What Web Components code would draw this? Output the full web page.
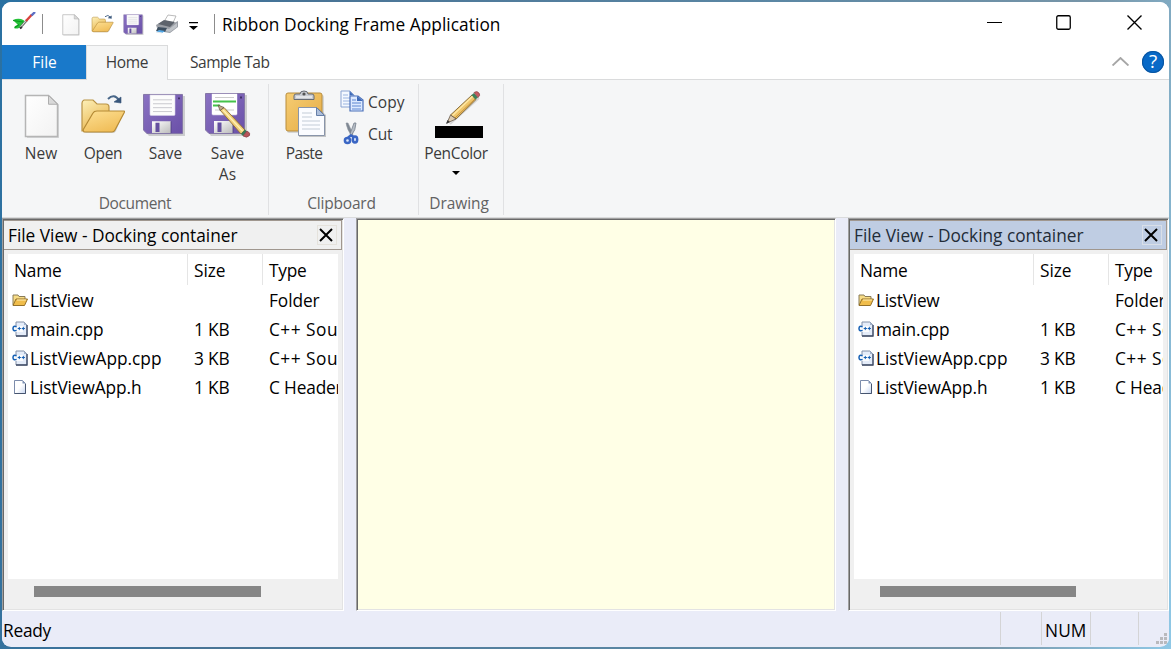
<!DOCTYPE html>
<html lang="en"><head><meta charset="utf-8"><title>Ribbon Docking Frame Application</title>
<style>
html,body{margin:0;height:100%;overflow:hidden}
body{background:linear-gradient(100deg,#2a71a2 0,#497496 25%,#5b87a4 60%,#7795a8 85%,#8fc8e6 100%);font-family:"Open Sans","Noto Sans",sans-serif;font-size:17.3px;color:#000}
</style></head><body>
<app-window></app-window>
<script>
const make=(name,html,after)=>customElements.define(name,class extends HTMLElement{
  connectedCallback(){
    if(this.shadowRoot)return;
    const t=document.createElement('template');
    t.innerHTML=typeof html==='function'?html(this):html;
    this.attachShadow({mode:'open'}).append(t.content.cloneNode(true));
    if(after)after(this);
  }
});

const folder=`<defs><linearGradient id="fa" y2="1" x2=".5"><stop stop-color="#fdf0b8"/><stop offset="1" stop-color="#e9b650"/></linearGradient><linearGradient id="fb" x2=".6" y2="1"><stop stop-color="#fde094"/><stop offset="1" stop-color="#f0bd58"/></linearGradient></defs>
<path d="M2 38V10q0-2 2-3h9l4 4h9q3 0 3 3v24z" fill="url(#fa)" stroke="#b99345" stroke-width="1.200"/><path d="M4 39L14 19l30-1L36 38q-1 2-3 2H6z" fill="#777" opacity=".3"/><path d="M3 37L13 20q1-2 4-2h27q1 0 0 2l-9 17q-1 2-3 2H4z" fill="url(#fb)" stroke="#b58a35" stroke-width="1.200"/>
<path d="M28 6q6-6 11 1" fill="none" stroke="#496789" stroke-width="2"/><path d="M34 9l7-5v6z" fill="#38567b" stroke="#38567b" stroke-width=".6"/>`;
const floppy=`<defs><linearGradient id="sa" x2="1" y2="1"><stop stop-color="#8a72c2"/><stop offset="1" stop-color="#6a50a8"/></linearGradient><linearGradient id="sb" x2="1" y2="1"><stop stop-color="#fff"/><stop offset="1" stop-color="#bbb"/></linearGradient></defs>
<path d="M3 2h39v41H6l-3-4z" fill="#555" opacity=".25" transform="translate(1 1)"/><path d="M1.500 1.500h39v40H5l-3.500-3.500z" fill="url(#sa)" stroke="#8476a6"/><path d="M8 2h25v20q0 1-1 1H9q-1 0-1-1z" fill="#fcfcfc" stroke="#d5cfe5" stroke-width=".6"/><path d="M11 7h19M11 11h19M11 15h19M11 19h19" stroke="#c9c9ce"/><path d="M36 4.500h2v2h-2z" fill="#403067"/><path d="M10 29h19v12H10z" fill="url(#sb)"/><path d="M13.500 30.500h4v9.500h-4z" fill="#6550a0"/><path d="M29 29v12" stroke="#4b3a7c" stroke-width=".8"/>`;
const icons={
 page:['0 0 36 46',`<path d="M2 1h23l9 9v34H2z" fill="#9a9a9a" opacity=".35" transform="translate(1 1)"/><path d="M1.500 1.500h23l9 9v33h-32z" fill="url(#pg)" stroke="#b5b5b5" stroke-width="1.500"/><path d="M24.500 1.500v9h9z" fill="#d9d9d9" stroke="#adadad"/><defs><linearGradient id="pg" x2="1" y2="1"><stop stop-color="#fff"/><stop offset="1" stop-color="#f2f2f2"/></linearGradient></defs>`],
 folder:['0 0 48 44',folder],
 floppy:['0 0 44 44',floppy],
 saveas:['0 0 48 46',floppy+`<rect x="8" y="2" width="25" height="20" fill="#fff"/><path d="M11 5.500h19M11 18h19" stroke="#ccc"/><path d="M9 9.500h23" stroke="#45c24b" stroke-width="1.800"/><path d="M9 13.500h7" stroke="#45c24b" stroke-width="1.800"/><path d="M16 18l4-2.500L41 38l-4 4z" fill="#f1cf7a" stroke="#8d6d36" stroke-width=".9"/><path d="M19 18l19.500 21" stroke="#fff0b4" stroke-width="1.400"/><path d="M14 13l6 2.500L16 18.500z" fill="#c4ac88" stroke="#5b5142" stroke-width=".7"/><path d="M37 42l4-4.500 2 2-4 4.500z" fill="#3a7a57"/><path d="M39 44l4-5q4 2 2.500 4.500-2.500 3-6.500.5z" fill="#b8555a" stroke="#84444a" stroke-width=".7"/>`],
 printer:['0 0 24 20',`<path d="M10 6l3-5 8 1-4 9z" fill="#fff" stroke="#aaa" stroke-width=".8"/><path d="M1 11l7-4 11 2 4-2v6l-8 6-12-2z" fill="#9a9ea5"/><path d="M3 10l6-4 11 2-5 5z" fill="#5d636c"/><path d="M2 13l12 2 8-6v4l-7 5-12-2z" fill="#bfc3c8"/><path d="M3 13l9 1-2 4-9-1z" fill="#3e4f60"/><path d="M4 16l6 1-3 2-6-1z" fill="#55a8e5"/><path d="M1 18l6 1" stroke="#e5e9ec"/>`],
 brush:['0 0 24 20',`<path d="M1 8q4-2 8-1 4 1 4 4-2 4-6 5-3 1-5 0l1-2 3-1-2-2z" fill="#26c238"/><path d="M1 8.500l10 1.500M3 15.500l4-3" stroke="#0b9a20" stroke-width="1.200"/><path d="M8 16l7-8" stroke="#777" stroke-width="2.400"/><path d="M8.500 15l6-7" stroke="#ddd" stroke-width="1"/><path d="M8 16.500l2-1.500" stroke="#333" stroke-width="1.800"/><path d="M14 9l6-6.500" stroke="#d8433c" stroke-width="2.400"/><path d="M19.500 3.500L23 0" stroke="#5b6fc4" stroke-width="2.400"/>`],
 paste:['0 0 42 48',`<defs><linearGradient id="pa" x2="1" y2="1"><stop stop-color="#f6cd74"/><stop offset="1" stop-color="#e5ab43"/></linearGradient></defs><rect x="2" y="5" width="37" height="38" rx="2" fill="#777" opacity=".25"/><rect x="1" y="3" width="36" height="38" rx="2" fill="url(#pa)" stroke="#b88d3d"/><path d="M9 9.500V6q0-2 2-2h4q0-3 4-3t4 3h4q2 0 2 2v3.500z" fill="#c8cbd1" stroke="#666b73"/><circle cx="19" cy="4" r="1.600" fill="#555"/><path d="M11 7h16" stroke="#fff"/><path d="M14 18h19l8 7v22H14z" fill="#666" opacity=".35"/><path d="M13.500 17.500h18l8 8v20h-26z" fill="#fbfcff" stroke="#8995aa"/><path d="M31.500 17.500v8h8z" fill="#aebfdb" stroke="#667fa8"/><path d="M17 23h10M17 27h10M17 31h18M17 35h18M17 39h18" stroke="#c3cbd8" stroke-width="1.200"/>`],
 copy:['0 0 24 22',`<path d="M1 1h9l4 4v12H1z" fill="#f4f8ff" stroke="#8ba4d2"/><path d="M9.500 1v4.500H14z" fill="#3d69b8"/><path d="M3 5h5M3 8h8M3 11h8M3 14h8" stroke="#9cb5e0"/><path d="M10 6h8l5 4v11H10z" fill="#dce9ff" stroke="#4a70ba" stroke-width="1.200"/><path d="M17 6v5h6z" fill="#3d69b8"/><path d="M12 10h4M12 13h9M12 16h9M12 19h9" stroke="#5e88d2" stroke-width="1.200"/>`],
 cut:['0 0 18 23',`<path d="M4 1q1 7 6 13l1-2L6 1z" fill="#7e8792" stroke="#8d959f" stroke-width=".6"/><path d="M14 1q0 7-5 13l-1-2 4-11z" fill="#b5bcc5" stroke="#77818e" stroke-width=".8"/><ellipse cx="5.500" cy="18.500" rx="2.600" ry="2.500" fill="#dfe9fb" stroke="#3a66c4" stroke-width="2.500"/><ellipse cx="13" cy="17.500" rx="2.200" ry="3" fill="#dfe9fb" stroke="#3a66c4" stroke-width="2.500"/><path d="M6 15.500l3-2 3 1.500" fill="none" stroke="#3a66c4" stroke-width="2.400"/>`],
 pencil:['0 0 36 36',`<path d="M5 34L34 8" stroke="#777" stroke-width="2" opacity=".25"/><path d="M5.500 25L27 5l4 4.500-20 19.500z" fill="#efc56a" stroke="#7d6336" stroke-width=".9"/><path d="M7.500 25.500L28 6" stroke="#ffe7a3" stroke-width="1.600"/><path d="M10 28L30 9" stroke="#c28d37" stroke-width="1"/><path d="M2 33l3.500-8 5.500 4z" fill="#dccab0" stroke="#65584a" stroke-width=".8"/><path d="M1 34l1.500-4 2.500 2z" fill="#383838"/><path d="M26.500 5l2.500-2 4 4.500-2.500 2z" fill="#3d8159"/><path d="M29 2.500q3-2 5 .5 2 2-1 4.500z" fill="#c55c61" stroke="#8c4a4c" stroke-width=".7"/>`],
 fdir:['0 0 16 14',`<path d="M1 12V2h5l1 1.500h6V6" fill="#f7dc86" stroke="#8a7c58"/><path d="M1 12.500L4 6h11.500l-3 6.500z" fill="#f0bd4b" stroke="#94712a"/><path d="M5 7h9" stroke="#fff0b5"/>`],
 fcpp:['0 0 16 16',`<path d="M4 1h8l3 3v11H4z" fill="#e4ecf9" stroke="#8390a8"/><path d="M15 4v11H4" fill="none" stroke="#404c66" stroke-width="1.300"/><path d="M12 1v3h3z" fill="#a2b1ca"/><path d="M0 5h11v6H0z" fill="#fff" opacity=".85"/><path d="M4.600 5.700Q1 4.400 1 7.500t3.600 1.900" fill="none" stroke="#1560b5" stroke-width="1.500"/><path d="M5.700 7.500h3.200M7.300 5.900v3.200M9.700 7.500h3.200M11.300 5.900v3.200" stroke="#1560b5" stroke-width="1"/>`],
 fh:['0 0 16 16',`<path d="M2.500 1.500h8l3 3v10h-11z" fill="url(#hg)" stroke="#7c8cab"/><path d="M13.500 5v9.500h-11" fill="none" stroke="#46546f"/><path d="M10.500 1.500v3h3z" fill="#7f92b4"/><defs><linearGradient id="hg" x2="1" y2="1"><stop offset=".5" stop-color="#fff"/><stop offset="1" stop-color="#c6d5f0"/></linearGradient></defs>`],
 min:['0 0 15 15',`<path d="M0 7.500h15" stroke="#000"/>`],
 max:['0 0 15 15',`<rect x=".75" y=".75" width="13.500" height="13.500" rx="1.500" fill="none" stroke="#000" stroke-width="1.300"/>`],
 close:['0 0 15 15',`<path d="M.5.5l14 14M14.500.5l-14 14" stroke="#000" stroke-width="1.350"/>`],
 up:['0 0 16 9',`<path d="M.5 8.500L8 1l7.500 7.500" fill="none" stroke="#a6a6a6" stroke-width="1.800"/>`],
 x:['0 0 14 14',`<path d="M1 1l12 12M13 1L1 13" stroke="#000" stroke-width="2"/>`],
 drop:['0 0 8 4',`<path d="M0 0h8L4 4z"/>`],
 qat:['0 0 9 8',`<path d="M0 0h9v1.300H0zM0 4h9L4.500 8z"/>`],
 grip:['0 0 11 11',`<path d="M8 0h3v3H8zM4 4h3v3H4zM8 4h3v3H8zM0 8h3v3H0zM4 8h3v3H4zM8 8h3v3H8z" fill="#b9b9bd"/>`]
};
make('ui-icon',e=>{const [v,p]=icons[e.getAttribute('name')];return `<style>:host{display:block;flex:none;width:${e.getAttribute('w')}px;height:${e.getAttribute('h')}px}svg{display:block;width:100%;height:100%}</style><svg viewBox="${v}" preserveAspectRatio="none">${p}</svg>`});

make('title-bar',`<style>
:host{display:flex;height:43px;align-items:center;box-sizing:border-box;padding-left:10px;background:#fff}
.sep{width:1px;height:20px;background:#8c8c8c}
.q{display:flex;align-items:center}
.w{margin-left:auto;display:flex;align-items:center;gap:54px;padding:0 27px 2px 0}
</style>
<ui-icon name="brush" w="24" h="20" style="margin-bottom:3px"></ui-icon><div class="sep" style="margin-left:6px"></div>
<div class="q"><ui-icon name="page" w="18" h="22" style="margin-left:19px;margin-top:3px"></ui-icon><ui-icon name="folder" w="24" h="20" style="margin-left:11px"></ui-icon><ui-icon name="floppy" w="21" h="21" style="margin:1px 0 0 8px"></ui-icon><ui-icon name="printer" w="24" h="20" style="margin-left:11px"></ui-icon><ui-icon name="qat" w="9" h="8" style="margin:5px 0 0 10px"></ui-icon></div>
<div class="sep" style="margin:0 7px 0 16px"></div><ui-label w="277" style="padding-top:1px">Ribbon Docking Frame Application</ui-label>
<div class="w"><ui-icon name="min" w="15" h="15"></ui-icon><ui-icon name="max" w="15" h="15"></ui-icon><ui-icon name="close" w="15" h="15" style="margin-left:2px"></ui-icon></div>`);

make('ribbon-tabs',`<style>
:host{display:flex;height:35px;background:linear-gradient(#dadbdc,#dadbdc) bottom/100% 1px no-repeat #fff;font-size:15.500px;color:#3b3b3b;line-height:34px}
div{box-sizing:border-box;text-align:center}
.f{width:84px;height:34px;background:#1979ca;color:#fff;padding-left:1px}
.h{width:82px;background:#f5f6f7;border:1px solid #dadbdc;border-bottom:0;line-height:33px}
.s{margin-left:22px}
.r{margin-left:auto;display:flex;align-items:center;gap:13px;padding:0 5px 2px 0}
.c{width:22px;height:22px;border-radius:50%;background:#0869c7;box-shadow:inset 0 0 0 1px #0a56a2;color:#fff;line-height:21px;font-size:19px}
</style><div class="f"><ui-label w="23">File</ui-label></div><div class="h"><ui-label w="41">Home</ui-label></div><div class="s"><ui-label w="78">Sample Tab</ui-label></div>
<div class="r"><ui-icon name="up" w="17" h="9"></ui-icon><div class="c">?</div></div>`);

make('ribbon-button',`<style>:host{display:flex;flex-direction:column;align-items:center;width:62px;line-height:21px}
.i{height:59px;display:flex;align-items:flex-start}</style><div class="i"><slot name="icon"></slot></div><slot></slot>`);
make('ribbon-group',e=>`<style>:host{display:flex;flex-direction:column;box-sizing:border-box;height:131px;width:${e.getAttribute('w')}px;border-right:1px solid #e0e1e3}
.b{flex:1;display:flex}.c{color:#626262;text-align:center;height:22px;line-height:20px}.c ui-label{position:relative;left:${e.getAttribute('shift')||0}px}</style><div class="b"><slot></slot></div><div class="c"><ui-label w="${e.getAttribute('lw')}">${e.getAttribute('label')}</ui-label></div>`);
make('ribbon-panel',`<style>
:host{display:flex;box-sizing:border-box;height:137px;padding:4px 0 0 0;background:#f5f6f7;font-size:15.500px;color:#3b3b3b}
.small{display:flex;flex-direction:column;margin-left:5px;padding-top:2px}
.row{display:flex;align-items:center;height:32px}
.pen{display:flex;flex-direction:column;align-items:center}.bar{width:48px;height:12px;background:#000}
</style>
<ribbon-group w="267" lw="71" label="Document">
<ribbon-button style="margin-left:8px"><ui-icon slot="icon" name="page" w="36" h="45" style="margin:10px 0 0 2px"></ui-icon><ui-label w="31">New</ui-label></ribbon-button>
<ribbon-button><ui-icon slot="icon" name="folder" w="48" h="44" style="margin:9px 0 0 2px"></ui-icon><ui-label w="37">Open</ui-label></ribbon-button>
<ribbon-button><ui-icon slot="icon" name="floppy" w="44" h="43" style="margin:9px 2px 0 0"></ui-icon><ui-label w="32" style="margin-left:1px">Save</ui-label></ribbon-button>
<ribbon-button><ui-icon slot="icon" name="saveas" w="48" h="46" style="margin:8px 0 0 2px"></ui-icon><ui-label w="32" style="margin-left:1px">Save</ui-label><ui-label w="16" style="margin-left:1px">As</ui-label></ribbon-button>
</ribbon-group>
<ribbon-group w="150" lw="67" label="Clipboard" shift="-2">
<ribbon-button style="margin-left:4px"><ui-icon slot="icon" name="paste" w="42" h="48" style="margin:6px 0 0 3px"></ui-icon><ui-label w="35">Paste</ui-label></ribbon-button>
<div class="small"><div class="row"><ui-icon name="copy" w="24" h="22" style="margin-top:-2px"></ui-icon><ui-label w="35" style="margin-left:4px">Copy</ui-label></div><div class="row"><ui-icon name="cut" w="18" h="23" style="margin:-1px 0 0 2px"></ui-icon><ui-label w="23" style="margin-left:8px">Cut</ui-label></div></div>
</ribbon-group>
<ribbon-group w="85" lw="58" label="Drawing" shift="-2">
<ribbon-button style="width:74px"><div slot="icon" class="pen" style="margin:6px 0 0 6px"><ui-icon name="pencil" w="36" h="36" style="margin-left:8px"></ui-icon><div class="bar"></div></div><ui-label w="62">PenColor</ui-label><ui-icon name="drop" w="8" h="4" style="margin:7px 1px 0 0"></ui-icon></ribbon-button>
</ribbon-group>`);

make('list-view',`<style>
:host{display:block;background:#fff;overflow:hidden;height:325px}
.r{display:grid;grid-template-columns:180px 75px 120px;height:29px;align-items:center;white-space:nowrap}
.h{height:32px;align-items:stretch;line-height:34px}
.h div{box-sizing:border-box;padding-left:6px}.h .d{border-right:1px solid #e5e5e5;height:31px}
.r>*{padding-left:6px}.n{display:flex;align-items:center;gap:2px;padding-left:4px!important}
ui-icon{margin-top:-2px}
</style>
<div class="r h"><div class="d"><ui-label w="46">Name</ui-label></div><div class="d"><ui-label w="30">Size</ui-label></div><div><ui-label w="36">Type</ui-label></div></div>
<div class="r"><div class="n"><ui-icon name="fdir" w="16" h="14"></ui-icon><ui-label w="62">ListView</ui-label></div><span></span><div><ui-label w="49">Folder</ui-label></div></div>
<div class="r"><div class="n"><ui-icon name="fcpp" w="16" h="16"></ui-icon><ui-label w="72">main.cpp</ui-label></div><div><ui-label w="34">1 KB</ui-label></div><div><ui-label w="94">C++ Source</ui-label></div></div>
<div class="r"><div class="n"><ui-icon name="fcpp" w="16" h="16"></ui-icon><ui-label w="130">ListViewApp.cpp</ui-label></div><div><ui-label w="34">3 KB</ui-label></div><div><ui-label w="94">C++ Source</ui-label></div></div>
<div class="r"><div class="n"><ui-icon name="fh" w="16" h="16"></ui-icon><ui-label w="110">ListViewApp.h</ui-label></div><div><ui-label w="34">1 KB</ui-label></div><div><ui-label w="72">C Header</ui-label></div></div>`);

make('dock-pane',e=>{const a=e.hasAttribute('active');return `<style>
:host{display:flex;flex-direction:column;box-sizing:border-box;width:${e.getAttribute('w')}px;height:393px;background:#f0f0f0;border:1px solid;border-color:#a0a0a0 #fff #fff #a0a0a0;box-shadow:inset 1px 1px #696969,inset -1px -1px #e3e3e3}
.t{display:flex;align-items:center;justify-content:space-between;box-sizing:border-box;height:30px;margin:1px 1px 0 1px;padding:0 4px 0 4px;border:1px solid #a0978f;border-left:0;background:${a?'#bfcde3':'#f0f0f0'};color:${a?'#222c38':'#000'}}
.x{box-sizing:border-box;width:20px;height:20px;border:1px solid ${a?'#d9dfe8':'#e5e2dc'};padding:2px 2px 2px 1px;margin-top:-1px}
list-view{margin:4px 5px 0 5px}
.s{width:${e.getAttribute('thumb')}px;height:11px;margin:7px 0 0 31px;background:#868686}
</style><div class="t"><ui-label w="228">File View - Docking container</ui-label><div class="x"><ui-icon name="x" w="14" h="14"></ui-icon></div></div><list-view></list-view><div class="s"></div>`});

make('status-bar',`<style>:host{display:flex;height:36px;background:#eaecf8;padding-left:1px}
.a{flex:1;line-height:41px}.d{box-sizing:border-box;border-left:1px solid #d4d4d6;margin:2px 0 1px;height:33px;line-height:37px;padding-left:3px}
.g{display:flex;align-items:flex-end;justify-content:flex-end}</style>
<div class="a"><ui-label w="46.500">Ready</ui-label></div><div class="d" style="width:41px"></div><div class="d" style="width:49px"><ui-label w="40">NUM</ui-label></div><div class="d" style="width:48px"></div><div class="d g" style="width:31px"><ui-icon name="grip" w="11" h="11" style="margin:0 2px 1px 0"></ui-icon></div>`);

make('app-window',`<style>
:host{display:block;box-sizing:border-box;height:649px;padding:2px}
.w{width:1167px;height:645px;border-radius:9px;overflow:hidden;background:#eaecf8}
.work{display:flex;border-top:1px solid #dadbdc;height:392px}
.view{box-sizing:border-box;width:480px;height:393px;margin:0 12px;background:#ffffe6;border:1px solid;border-color:#a0a0a0 #fff #fff #a0a0a0;box-shadow:inset 1px 1px #696969,inset -1px -1px #e3e3e3}
.work>*{flex:none}
</style><div class="w"><title-bar></title-bar><ribbon-tabs></ribbon-tabs><ribbon-panel></ribbon-panel><div class="work"><dock-pane w="342" thumb="227"></dock-pane><div class="view"></div><dock-pane active w="321" thumb="196"></dock-pane></div><status-bar></status-bar></div>`);

/* Label whose tracking is set so that its text spans the width given in w. */
make('ui-label',`<style>:host{display:inline-block;white-space:nowrap}</style><span><slot></slot></span>`,e=>{
  const s=e.shadowRoot.querySelector('span'),w=+e.getAttribute('w')+1.500;
  s.style.letterSpacing=((w-s.getBoundingClientRect().width)/e.textContent.length).toFixed(3)+'px';
});
</script></body></html>
